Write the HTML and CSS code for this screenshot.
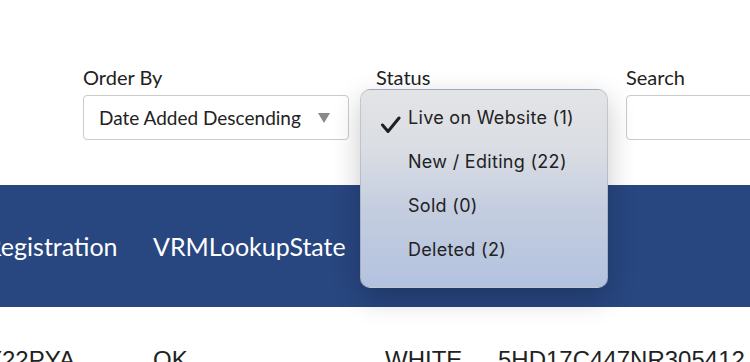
FILE: index.html
```html
<!DOCTYPE html>
<html>
	<head>
		<title>Vehicles</title>
		<link rel="stylesheet" href="styles.css">
	</head>
	<body>
		<div class="filters">
			<div class="filter order">
				<span class="filter-label">Order By</span>
				<div class="select">
					<span>Date Added Descending</span>
					<i class="arrow"></i>
				</div>
			</div>
			<div class="filter status">
				<span class="filter-label">Status</span>
				<div class="select"><span>Live on Website (1)</span><i class="arrow"></i></div>
				<ul class="menu">
					<li class="checked">
						<svg class="tick" width="22" height="18" viewBox="0 0 22 18"><path d="M2.5 9 L8 15.5 L19 2" fill="none" stroke="#1f1f1f" stroke-width="3" stroke-linecap="round" stroke-linejoin="round"/></svg>
						<span>Live on Website (1)</span>
					</li>
					<li><span>New / Editing (22)</span></li>
					<li><span>Sold (0)</span></li>
					<li><span>Deleted (2)</span></li>
				</ul>
			</div>
			<div class="filter search">
				<span class="filter-label">Search</span>
				<input type="text" class="search-box">
			</div>
		</div>

		<div class="listing">
			<div class="head">
				<div>Registration</div>
				<div>VRMLookupState</div>
				<div>Colour</div>
				<div>VIN</div>
			</div>
			<div class="row">
				<div>Y22PYA</div>
				<div>OK</div>
				<div>WHITE</div>
				<div>5HD17C447NR305412</div>
			</div>
		</div>
	</body>
</html>
```

FILE: styles.css
```css
body{
	margin: 0;
	background: #fff;
	font-family: Lato, "Open Sans", sans-serif;
	color: #222;
	overflow: hidden;
}
.filters{
	display: flex;
	gap: 27px;
	padding: 65px 0 0 83px;
}
.filter{
	display: flex;
	flex-direction: column;
	position: relative;
}
.filter-label{
	font-size: 20px;
	line-height: 24px;
	margin-bottom: 6px;
}
.select{
	box-sizing: border-box;
	height: 45px;
	border: 1px solid #cbcbcb;
	border-radius: 4px;
	background: #fff;
	display: flex;
	align-items: center;
	padding: 0 18px 0 15px;
	font-size: 19px;
	gap: 14px;
	white-space: nowrap;
}
.order .select{
	width: 266px;
}
.status .select{
	width: 223px;
}
.arrow{
	width: 0;
	height: 0;
	border-left: 6px solid transparent;
	border-right: 6px solid transparent;
	border-top: 10px solid #8a8a8a;
	margin-left: auto;
}
.search-box{
	box-sizing: border-box;
	width: 200px;
	height: 45px;
	border: 1px solid #cbcbcb;
	border-radius: 4px;
	outline: none;
}

/* open status dropdown */
.menu{
	position: absolute;
	top: 24px;
	left: -16px;
	width: 248px;
	box-sizing: border-box;
	margin: 0;
	padding: 5px 0 16px;
	list-style: none;
	border-radius: 10px;
	border: 1px solid rgba(0,0,0,0.12);
	background: linear-gradient(#e3e4e6 0%, #dadde3 30%, #c5cee0 60%, #b3c2df 100%);
	box-shadow: 0 10px 28px rgba(0,0,0,0.22);
	font-family: Inter, "Open Sans", sans-serif;
	font-size: 18px;
	letter-spacing: 0.3px;
	color: #222;
	z-index: 2;
}
.menu li{
	display: flex;
	align-items: center;
	height: 44px;
	padding-left: 47px;
	position: relative;
	white-space: nowrap;
}
.tick{
	position: absolute;
	left: 19px;
	top: 21px;
}

.listing{
	margin: 45px 0 0 -14px;
}
.head, .row{
	display: grid;
	grid-template-columns: 167px 232px 113px 320px;
	white-space: nowrap;
}
.head{
	background: #284680;
	color: #fff;
	height: 122px;
	align-items: center;
	font-size: 25px;
}
.row{
	padding-top: 38px;
	font-family: "Liberation Sans", Arial, sans-serif;
	font-size: 24px;
	line-height: 30px;
	color: #222;
}
```
